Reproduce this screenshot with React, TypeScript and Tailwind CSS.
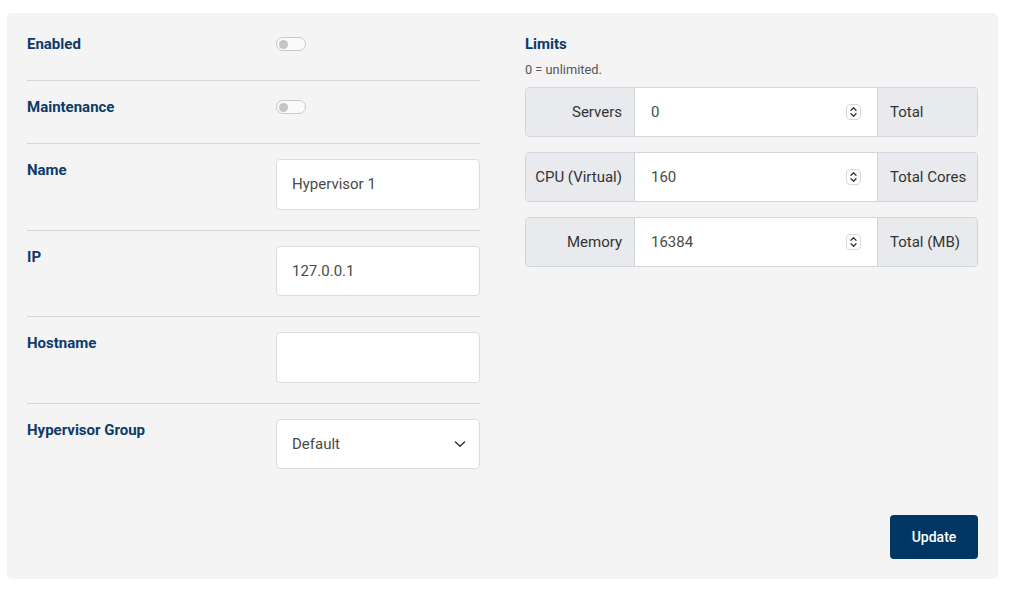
import React from 'react';

const limits = [
  { label: 'Servers', value: '0', unit: 'Total' },
  { label: 'CPU (Virtual)', value: '160', unit: 'Total Cores' },
  { label: 'Memory', value: '16384', unit: 'Total (MB)' },
];

const Toggle: React.FC = () => (
  <div className="w-[30px] h-[14px] rounded-full border border-[#c9c9c9] bg-[#fafafa] flex items-center pl-[2px]">
    <div className="w-[9px] h-[9px] rounded-full bg-[#c4c4c4]" />
  </div>
);

const Spinner: React.FC = () => (
  <div className="w-[15px] h-[16px] rounded-[4px] border border-[#d8d8d8] bg-white flex items-center justify-center">
    <svg width="9" height="12" viewBox="0 0 9 12" fill="none" stroke="#333" strokeWidth="1.3" strokeLinecap="round" strokeLinejoin="round">
      <path d="M2 4.2 4.5 1.8 7 4.2" />
      <path d="M2 7.8 4.5 10.2 7 7.8" />
    </svg>
  </div>
);

const Row: React.FC<{ label: string; first?: boolean; last?: boolean; children: React.ReactNode }> = ({ label, first, last, children }) => (
  <div className={`flex ${first ? 'pt-0' : 'pt-[15px]'} ${last ? '' : 'pb-5 border-b border-[#d4d4d4]'}`}>
    <label className="w-[249px] pt-px text-[15px] leading-5 font-bold text-[#0b3b69]">{label}</label>
    <div className="flex-1">{children}</div>
  </div>
);

const TextInput: React.FC<{ value?: string }> = ({ value }) => (
  <div className="h-[50.5px] rounded-[4px] border border-[#d9dce0] bg-white pl-[15px] pr-4 flex items-center text-[15px] text-[#4a4a4a]">
    {value}
  </div>
);

export default function App() {
  return (
    <div className="min-h-screen bg-white pt-[13px] px-[7px] font-['Roboto','Liberation_Sans',sans-serif]">
      <div className="w-[991px] h-[566px] bg-[#f4f4f4] rounded-[5px] p-5 flex flex-col">
        <div className="grid grid-cols-[453px_453px] gap-[45px]">
          <div>
            <Row label="Enabled" first>
              <div className="h-[27px] pt-1"><Toggle /></div>
            </Row>
            <Row label="Maintenance">
              <div className="h-[27px] pt-1"><Toggle /></div>
            </Row>
            <Row label="Name">
              <TextInput value="Hypervisor 1" />
            </Row>
            <Row label="IP">
              <TextInput value="127.0.0.1" />
            </Row>
            <Row label="Hostname">
              <TextInput />
            </Row>
            <Row label="Hypervisor Group" last>
              <div className="h-[50.5px] rounded-[4px] border border-[#d9dce0] bg-white pl-[15px] pr-[13px] flex items-center justify-between text-[15px] text-[#4a4a4a]">
                <span>Default</span>
                <svg width="12" height="8" viewBox="0 0 12 8" fill="none" stroke="#333" strokeWidth="1.5" strokeLinecap="round" strokeLinejoin="round">
                  <path d="M1.5 2 6 6.2 10.5 2" />
                </svg>
              </div>
            </Row>
          </div>
          <div>
            <div className="pt-px text-[15px] leading-5 font-bold text-[#0b3b69]">Limits</div>
            <div className="mt-2 text-[12.8px] leading-4 text-[#555]">0 = unlimited.</div>
            <div className="mt-[9px] flex flex-col gap-[15px]">
              {limits.map((l) => (
                <div key={l.label} className="h-[50px] flex rounded-[4px] border border-[#d2d6db] overflow-hidden text-[15px]">
                  <div className="w-[109px] bg-[#e8eaed] border-r border-[#d2d6db] flex items-center justify-end pr-3 text-[#333]">
                    {l.label}
                  </div>
                  <div className="flex-1 bg-white pl-4 pr-4 flex items-center justify-between text-[#4a4a4a]">
                    <span>{l.value}</span>
                    <Spinner />
                  </div>
                  <div className="w-[100px] bg-[#e8eaed] border-l border-[#d2d6db] flex items-center pl-3 text-[#333]">
                    {l.unit}
                  </div>
                </div>
              ))}
            </div>
          </div>
        </div>
        <div className="mt-auto flex justify-end">
          <button className="w-[88px] h-[44px] rounded-[4px] bg-[#003663] text-white text-[14px] font-medium">
            Update
          </button>
        </div>
      </div>
    </div>
  );
}
